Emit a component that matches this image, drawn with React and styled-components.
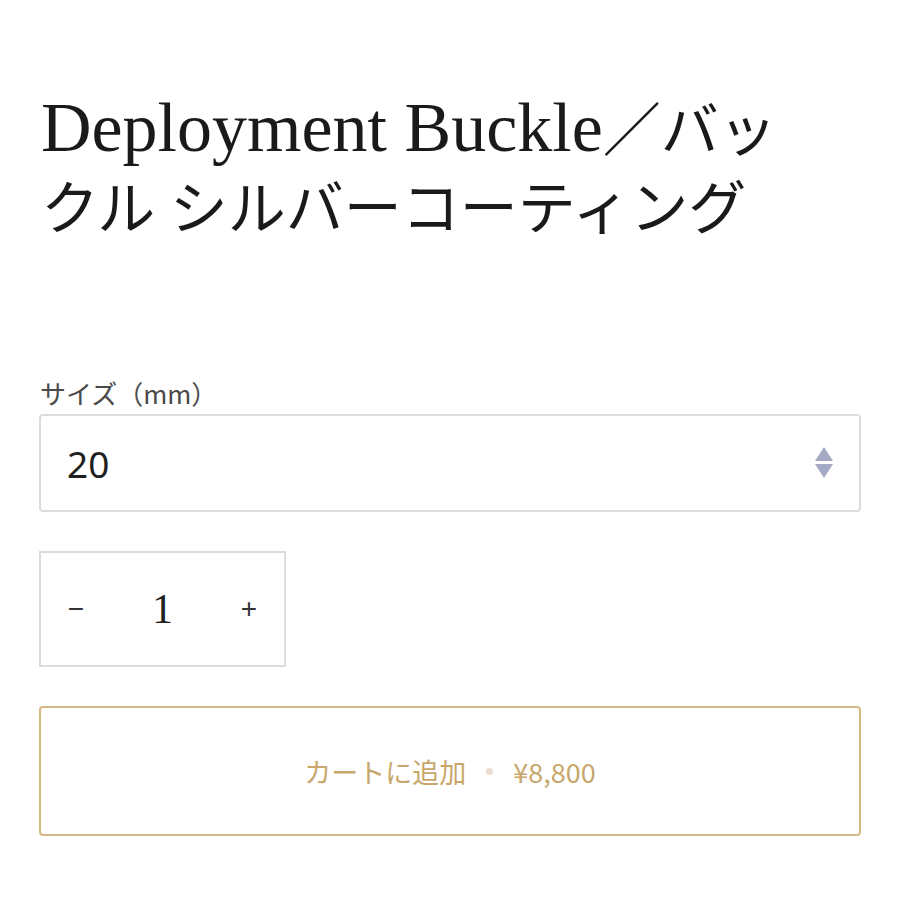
import React, { useState } from "react";
import styled, { createGlobalStyle } from "styled-components";

const GlobalStyle = createGlobalStyle`
  body {
    margin: 0;
    background: #ffffff;
    font-family: "Noto Sans CJK JP", "Noto Sans", sans-serif;
  }
`;

function App() {
  const [qty, setQty] = useState(1);

  return (
    <Page>
      <GlobalStyle />
      <Title>
        <Latin>Deployment Buckle</Latin>／バックル シルバーコーティング
      </Title>

      <Field>
        <Label>サイズ（mm）</Label>
        <SelectBox>
          <SelectValue>20</SelectValue>
          <svg width="20" height="34" viewBox="0 0 20 34">
            <polygon points="10,1 19,15 1,15" fill="#a4aac3" />
            <polygon points="1,18 19,18 10,32" fill="#a4aac3" />
          </svg>
        </SelectBox>
      </Field>

      <Quantity>
        <QtyButton onClick={() => setQty(Math.max(1, qty - 1))}>−</QtyButton>
        <QtyValue>{qty}</QtyValue>
        <QtyButton onClick={() => setQty(qty + 1)}>+</QtyButton>
      </Quantity>

      <CartButton>
        カートに追加
        <Dot />
        ¥8,800
      </CartButton>
    </Page>
  );
}

const Page = styled.div`
  padding: 89px 39px 40px;
`;

const Title = styled.h1`
  max-width: 760px;
  margin: 0 0 126px;
  font-family: "Liberation Serif", "Noto Sans CJK JP", serif;
  font-weight: 400;
  font-size: 58px;
  line-height: 78px;
  color: #1a1a1a;
  padding-left: 2px;
`;

const Latin = styled.span`
  font-size: 70px;
`;

const Field = styled.div`
  display: flex;
  flex-direction: column;
  gap: 3px;
`;

const Label = styled.div`
  font-size: 26px;
  line-height: 36px;
  color: #4a4a4a;
  padding-left: 1px;
`;

const SelectBox = styled.div`
  display: flex;
  align-items: center;
  justify-content: space-between;
  height: 94px;
  padding: 0 25px 0 26px;
  border: 2px solid #dcdcdc;
  border-radius: 4px;
`;

const SelectValue = styled.span`
  font-family: "Noto Sans", sans-serif;
  font-size: 37px;
  color: #1f1f1f;
`;

const Quantity = styled.div`
  display: grid;
  grid-template-columns: 70px 1fr 70px;
  align-items: center;
  width: 243px;
  height: 112px;
  margin-top: 39px;
  border: 2px solid #dcdcdc;
`;

const QtyButton = styled.button`
  border: none;
  background: none;
  padding: 0;
  font-family: "Liberation Sans", sans-serif;
  font-size: 28px;
  font-weight: 300;
  color: #333;
  cursor: pointer;
`;

const QtyValue = styled.span`
  text-align: center;
  font-family: "Liberation Serif", serif;
  font-size: 42px;
  color: #1f1f1f;
`;

const CartButton = styled.button`
  display: flex;
  align-items: center;
  justify-content: center;
  gap: 20px;
  width: 100%;
  height: 130px;
  margin-top: 39px;
  background: #ffffff;
  border: 2px solid #d3b884;
  border-radius: 4px;
  font-family: "Noto Sans CJK JP", "Noto Sans", sans-serif;
  font-size: 27px;
  color: #c7a76b;
  cursor: pointer;
`;

const Dot = styled.span`
  width: 7px;
  height: 7px;
  border-radius: 50%;
  background: #ecdcd0;
`;

export default App;
